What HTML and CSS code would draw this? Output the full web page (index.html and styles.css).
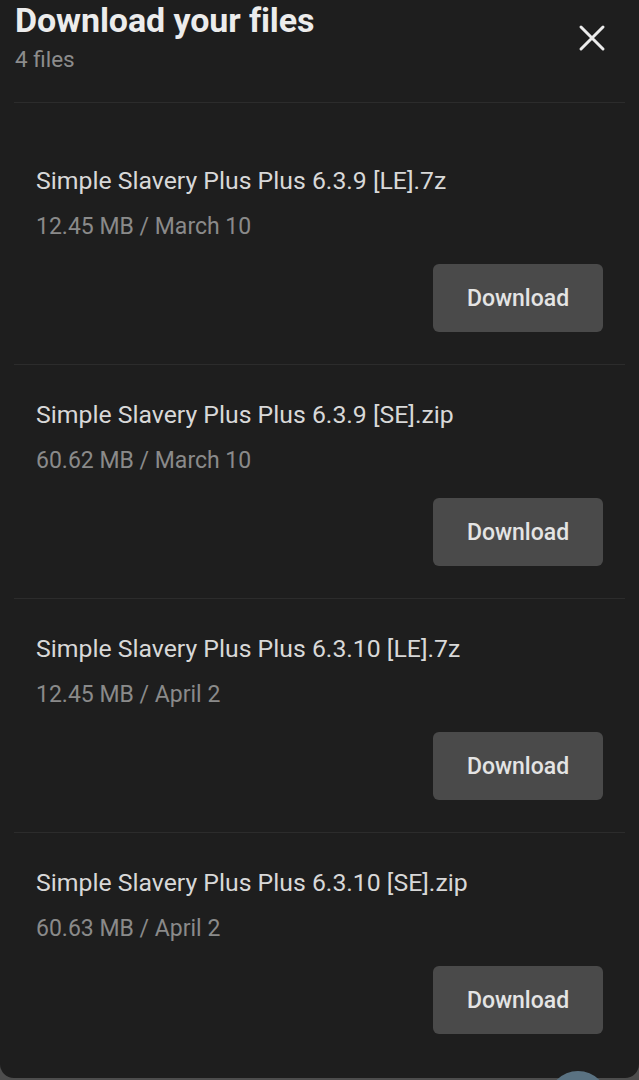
FILE: index.html
```html
<!DOCTYPE html>
<html lang="en">
<head>
<meta charset="utf-8">
<title>Download your files</title>
<link rel="stylesheet" href="styles.css">
</head>
<body>
<div class="panel">
  <header class="header">
    <div class="titles">
      <h1 class="title">Download your files</h1>
      <div class="count">4 files</div>
    </div>
    <button class="close" aria-label="Close">
      <svg width="28" height="28" viewBox="0 0 28 28"><path d="M3 3 L25 25 M25 3 L3 25" stroke="#ececec" stroke-width="3" stroke-linecap="round" fill="none"/></svg>
    </button>
  </header>
  <ul class="list">
    <li class="item">
      <div class="name">Simple Slavery Plus Plus 6.3.9 [LE].7z</div>
      <div class="meta">12.45 MB / March 10</div>
      <div class="actions"><button class="btn">Download</button></div>
    </li>
    <li class="item">
      <div class="name">Simple Slavery Plus Plus 6.3.9 [SE].zip</div>
      <div class="meta">60.62 MB / March 10</div>
      <div class="actions"><button class="btn">Download</button></div>
    </li>
    <li class="item">
      <div class="name">Simple Slavery Plus Plus 6.3.10 [LE].7z</div>
      <div class="meta">12.45 MB / April 2</div>
      <div class="actions"><button class="btn">Download</button></div>
    </li>
    <li class="item">
      <div class="name">Simple Slavery Plus Plus 6.3.10 [SE].zip</div>
      <div class="meta">60.63 MB / April 2</div>
      <div class="actions"><button class="btn">Download</button></div>
    </li>
  </ul>
</div>
<div class="fab"></div>
</body>
</html>
```
FILE: styles.css
```css
html, body {
  margin: 0;
  padding: 0;
}
body {
  background: #4d4d4d;
  font-family: Roboto, "Noto Sans", "Liberation Sans", sans-serif;
  width: 639px;
  height: 1080px;
  overflow: hidden;
  position: relative;
}
.panel {
  background: #1e1e1e;
  height: 1078px;
  border-radius: 0 0 14px 14px;
  padding: 0 14px;
  box-sizing: border-box;
  overflow: hidden;
}
.header {
  display: flex;
  justify-content: space-between;
  align-items: flex-start;
  border-bottom: 1px solid #2c2c2c;
  height: 103px;
  box-sizing: border-box;
}
.titles {
  padding-left: 1px;
}
.title {
  margin: 0;
  font-size: 34px;
  font-weight: 700;
  color: #ececec;
  line-height: 40px;
  letter-spacing: -0.1px;
}
.count {
  font-size: 22.5px;
  color: #8c8c8c;
  line-height: 38px;
  margin-top: 0;
}
.close {
  background: none;
  border: 0;
  padding: 0;
  margin: 24px 19px 0 0;
  width: 28px;
  height: 28px;
  cursor: pointer;
}
.close svg { display: block; }
.list {
  list-style: none;
  margin: 0;
  padding: 28px 0 0;
}
.item {
  padding: 35px 22px 32px;
  border-bottom: 1px solid #2c2c2c;
}
.item:last-child { border-bottom: 0; }
.name {
  font-size: 24.8px;
  line-height: 30px;
  color: #d8d8d8;
}
.meta {
  margin-top: 17px;
  font-size: 23px;
  line-height: 28px;
  color: #8a8a8a;
}
.actions {
  display: flex;
  justify-content: flex-end;
  margin-top: 23px;
}
.btn {
  background: #4a4a4a;
  border: 0;
  border-radius: 6px;
  width: 170px;
  height: 68px;
  font-family: inherit;
  font-size: 23px;
  font-weight: 500;
  color: #e4e4e4;
  cursor: pointer;
}
.fab {
  position: absolute;
  left: 548px;
  top: 1071px;
  width: 60px;
  height: 60px;
  border-radius: 50%;
  background: #5a7282;
}
```
